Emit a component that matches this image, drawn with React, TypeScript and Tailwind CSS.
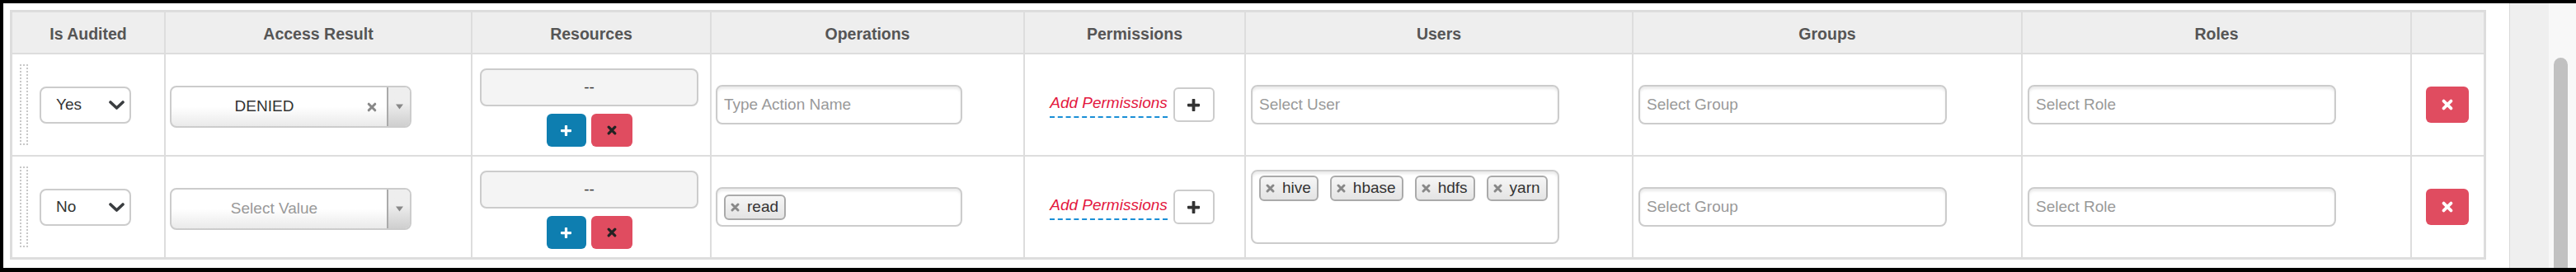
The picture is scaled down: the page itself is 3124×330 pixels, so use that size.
import React from "react";

const XMark = ({ size, color, sw }: { size: number; color: string; sw: number }) => (
  <svg width={size} height={size} viewBox="0 0 12 12">
    <path d="M2.2 2.2 L9.8 9.8 M9.8 2.2 L2.2 9.8" stroke={color} strokeWidth={sw} strokeLinecap="round" />
  </svg>
);

const Plus = ({ size, color }: { size: number; color: string }) => (
  <svg width={size} height={size} viewBox="0 0 12 12">
    <path d="M6 1 V11 M1 6 H11" stroke={color} strokeWidth={3} strokeLinecap="round" />
  </svg>
);

const Chevron = () => (
  <svg width="19" height="11" viewBox="0 0 19 11">
    <path d="M2 2 L9.5 9 L17 2" stroke="#3a3d40" strokeWidth="3.6" fill="none" strokeLinecap="round" strokeLinejoin="round" />
  </svg>
);

const Caret = () => (
  <svg width="9" height="7" viewBox="0 0 9 7">
    <path d="M0 0.5 H9 L4.5 6.5 Z" fill="#888" />
  </svg>
);

const headers = ["Is Audited", "Access Result", "Resources", "Operations", "Permissions", "Users", "Groups", "Roles", ""];
const widths = ["w-[186px]", "w-[372px]", "w-[290px]", "w-[380px]", "w-[268px]", "w-[470px]", "w-[472px]", "w-[472px]", "flex-1"];

const Chip = ({ label }: { label: string }) => (
  <span className="flex h-[31px] items-center rounded-[6px] border-2 border-[#aaa] bg-linear-to-b from-[#f6f6f6] to-[#e4e4e4] pl-[6px] pr-[7px] text-[19px] text-[#333]">
    <span className="mr-[9px] flex w-[11px] items-center justify-center">
      <XMark size={11} color="#888" sw={3.2} />
    </span>
    {label}
  </span>
);

const TextInput = ({ placeholder, width }: { placeholder: string; width: string }) => (
  <div className={`${width} flex h-[48px] items-center rounded-[8px] border-2 border-[#ccc] bg-white pl-[8px] text-[19px] text-[#999] shadow-[inset_0_3px_3px_rgba(0,0,0,0.08)]`}>
    {placeholder}
  </div>
);

type RowProps = {
  audited: string;
  access: string | null;
  operation: string | null;
  users: string[];
  last?: boolean;
};

const Row = ({ audited, access, operation, users, last }: RowProps) => (
  <div className={`flex ${last ? "h-[122px]" : "h-[124px] border-b-2 border-[#ddd]"}`}>
    {/* Is Audited */}
    <div className={`${widths[0]} flex items-center border-r-2 border-[#ddd] pl-[9px]`}>
      <div className="h-[98px] w-[10px] border-2 border-dotted border-[#c8c8c8]" />
      <div className="ml-[14px] flex h-[45px] w-[111px] items-center justify-between rounded-[8px] border-2 border-[#ccc] bg-white pl-[18px] pr-[6px] text-[19px] text-[#333]">
        <span>{audited}</span>
        <Chevron />
      </div>
    </div>

    {/* Access Result */}
    <div className={`${widths[1]} flex items-center border-r-2 border-[#ddd] pl-[5px]`}>
      <div className="mt-[5px] flex h-[51px] w-[293px] items-stretch overflow-hidden rounded-[8px] border-2 border-[#ccc] bg-linear-to-t from-[#eaeaea] to-white to-50%">
        {access ? (
          <>
            <span className="flex flex-1 items-center justify-center text-[19px] text-[#333]">{access}</span>
            <span className="flex w-[36px] items-center justify-center">
              <XMark size={12} color="#888" sw={3} />
            </span>
          </>
        ) : (
          <span className="flex flex-1 items-center justify-center pr-[12px] text-[19px] text-[#999]">Select Value</span>
        )}
        <span className="flex w-[28px] items-center justify-center border-l-2 border-[#aaa] bg-linear-to-t from-[#cfcfcf] to-[#eee] to-60%">
          <Caret />
        </span>
      </div>
    </div>

    {/* Resources */}
    <div className={`${widths[2]} flex flex-col justify-center gap-[9px] border-r-2 border-[#ddd] pl-[9px] pt-[7px]`}>
      <div className="flex h-[46px] w-[265px] items-center justify-center rounded-[8px] border-2 border-[#ccc] bg-[#f4f4f4] text-[19px] text-[#333]">
        --
      </div>
      <div className="flex w-[265px] justify-center gap-[6px]">
        <button className="flex h-[40px] w-[48px] items-center justify-center rounded-[6px] bg-[#0e7eb0]">
          <Plus size={13} color="#fff" />
        </button>
        <button className="flex h-[40px] w-[50px] items-center justify-center rounded-[6px] bg-[#e04c60]">
          <XMark size={12} color="#222" sw={3.2} />
        </button>
      </div>
    </div>

    {/* Operations */}
    <div className={`${widths[3]} flex items-center border-r-2 border-[#ddd] pl-[5px]`}>
      {operation ? (
        <div className="flex h-[48px] w-[299px] items-center rounded-[8px] border-2 border-[#ccc] bg-white pl-[8px] shadow-[inset_0_3px_3px_rgba(0,0,0,0.08)]">
          <Chip label={operation} />
        </div>
      ) : (
        <TextInput placeholder="Type Action Name" width="w-[299px]" />
      )}
    </div>

    {/* Permissions */}
    <div className={`${widths[4]} flex items-center justify-center gap-[7px] border-r-2 border-[#ddd] pr-[6px]`}>
      <span className="border-b-2 border-dashed border-[#1a8fd6] pb-[2px] text-[19px] italic text-[#e3173e]">Add Permissions</span>
      <button className="flex h-[42px] w-[50px] items-center justify-center rounded-[6px] border-2 border-[#ccc] bg-white">
        <Plus size={15} color="#333" />
      </button>
    </div>

    {/* Users */}
    <div className={`${widths[5]} flex items-center border-r-2 border-[#ddd] pl-[6px]`}>
      {users.length ? (
        <div className="flex h-[90px] w-[374px] items-start gap-[14px] rounded-[8px] border-2 border-[#ccc] bg-white pl-[8px] pt-[5px] shadow-[inset_0_3px_3px_rgba(0,0,0,0.08)]">
          {users.map((u) => (
            <Chip key={u} label={u} />
          ))}
        </div>
      ) : (
        <TextInput placeholder="Select User" width="w-[374px]" />
      )}
    </div>

    {/* Groups */}
    <div className={`${widths[6]} flex items-center border-r-2 border-[#ddd] pl-[6px]`}>
      <TextInput placeholder="Select Group" width="w-[374px]" />
    </div>

    {/* Roles */}
    <div className={`${widths[7]} flex items-center border-r-2 border-[#ddd] pl-[6px]`}>
      <TextInput placeholder="Select Role" width="w-[374px]" />
    </div>

    {/* Delete */}
    <div className={`${widths[8]} flex items-center justify-center pr-[2px]`}>
      <button className="flex h-[44px] w-[52px] items-center justify-center rounded-[6px] bg-[#e04c60]">
        <XMark size={14} color="#fff" sw={3.2} />
      </button>
    </div>
  </div>
);

export default function App() {
  return (
    <div className="h-[330px] w-[3124px] bg-black pl-[4px] pt-[4px] font-['Liberation_Sans',Arial,sans-serif]">
      <div className="flex h-[321px] bg-white">
        <div className="ml-[8px] mt-[8px] h-[303px] w-[3003px] border-[3px] border-[#ddd] bg-white">
          <div className="flex h-[51px] border-b-2 border-[#ddd] bg-[#eee]">
            {headers.map((h, i) => (
              <div
                key={i}
                className={`${widths[i]} flex items-center justify-center pt-[5px] text-[19.5px] font-bold text-[#555] ${i < 8 ? "border-r-2 border-[#ddd]" : ""}`}
              >
                {h}
              </div>
            ))}
          </div>
          <Row audited="Yes" access="DENIED" operation={null} users={[]} />
          <Row audited="No" access={null} operation="read" users={["hive", "hbase", "hdfs", "yarn"]} last />
        </div>
        <div className="ml-[28px] w-[1px] bg-[#d9d9d9]" />
        <div className="w-[47px] bg-[#efefef]" />
        <div className="flex flex-1 flex-col bg-[#f8f8f8] pl-[6px] pr-[10px] pt-[66px]">
          <div className="flex-1 rounded-t-full bg-[#c1c1c1]" />
        </div>
      </div>
    </div>
  );
}
